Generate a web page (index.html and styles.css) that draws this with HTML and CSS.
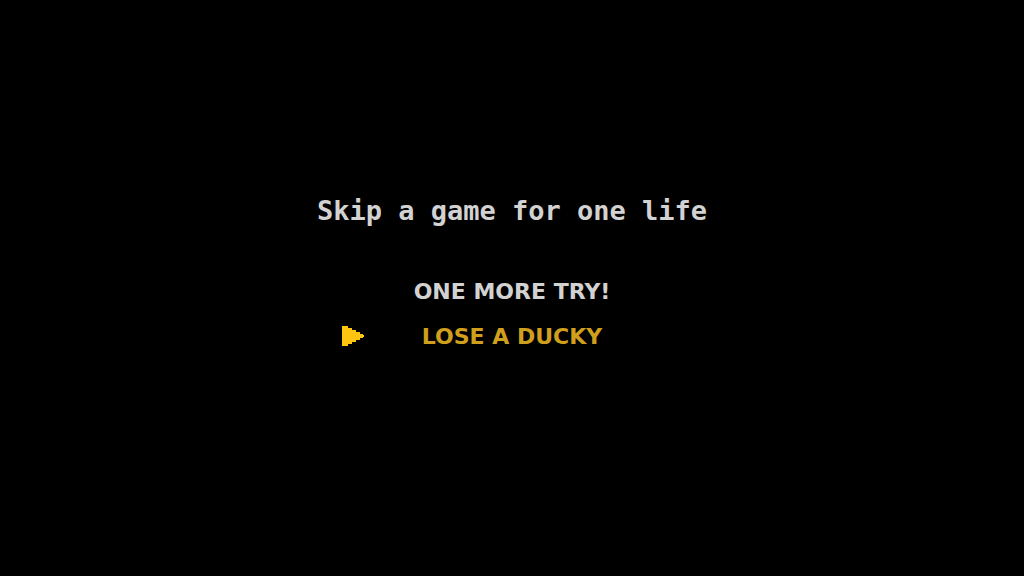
FILE: index.html
```html
<!DOCTYPE html>
<html lang="en">

<head>
    <meta charset="utf-8">
    <title>Skip a game</title>
    <link rel="stylesheet" href="styles.css">
</head>

<body>
    <main class="screen">
        <h1 class="title">Skip a game for one life</h1>
        <div class="menu">
            <button class="option" type="button">ONE MORE TRY!</button>
            <button class="option selected" type="button">
                <svg class="cursor" viewBox="0 0 22 20" shape-rendering="crispEdges" aria-hidden="true">
                    <path d="M0 0h6v2h4v2h4v2h4v2h3v1h1v2h-1v1h-3v2h-4v2h-4v2h-4v2H0z" />
                </svg>
                LOSE A DUCKY
            </button>
        </div>
    </main>
</body>

</html>
```
FILE: styles.css
```css
body {
    margin: 0;
    background-color: #000;
    font-family: "DejaVu Sans", Verdana, sans-serif;
}

.screen {
    min-height: 100vh;
    box-sizing: border-box;
    padding-bottom: 24px;
    display: flex;
    flex-direction: column;
    align-items: center;
    justify-content: center;
}

.title {
    margin: 0 0 40px;
    color: #d2d2d2;
    font-family: "DejaVu Sans Mono", monospace;
    font-size: 27px;
    line-height: 36px;
    font-weight: bold;
}

.menu {
    display: flex;
    flex-direction: column;
    align-items: center;
}

.option {
    position: relative;
    padding: 0;
    border: 0;
    background: none;
    color: #d2d2d2;
    font-family: inherit;
    font-size: 22px;
    line-height: 45px;
    font-weight: bold;
    cursor: pointer;
}

.selected {
    color: #d0a01c;
}

/* arrow next to the selected option */
.cursor {
    position: absolute;
    right: calc(100% + 58px);
    top: 12px;
    width: 22px;
    height: 20px;
    fill: #fdc410;
}
```
